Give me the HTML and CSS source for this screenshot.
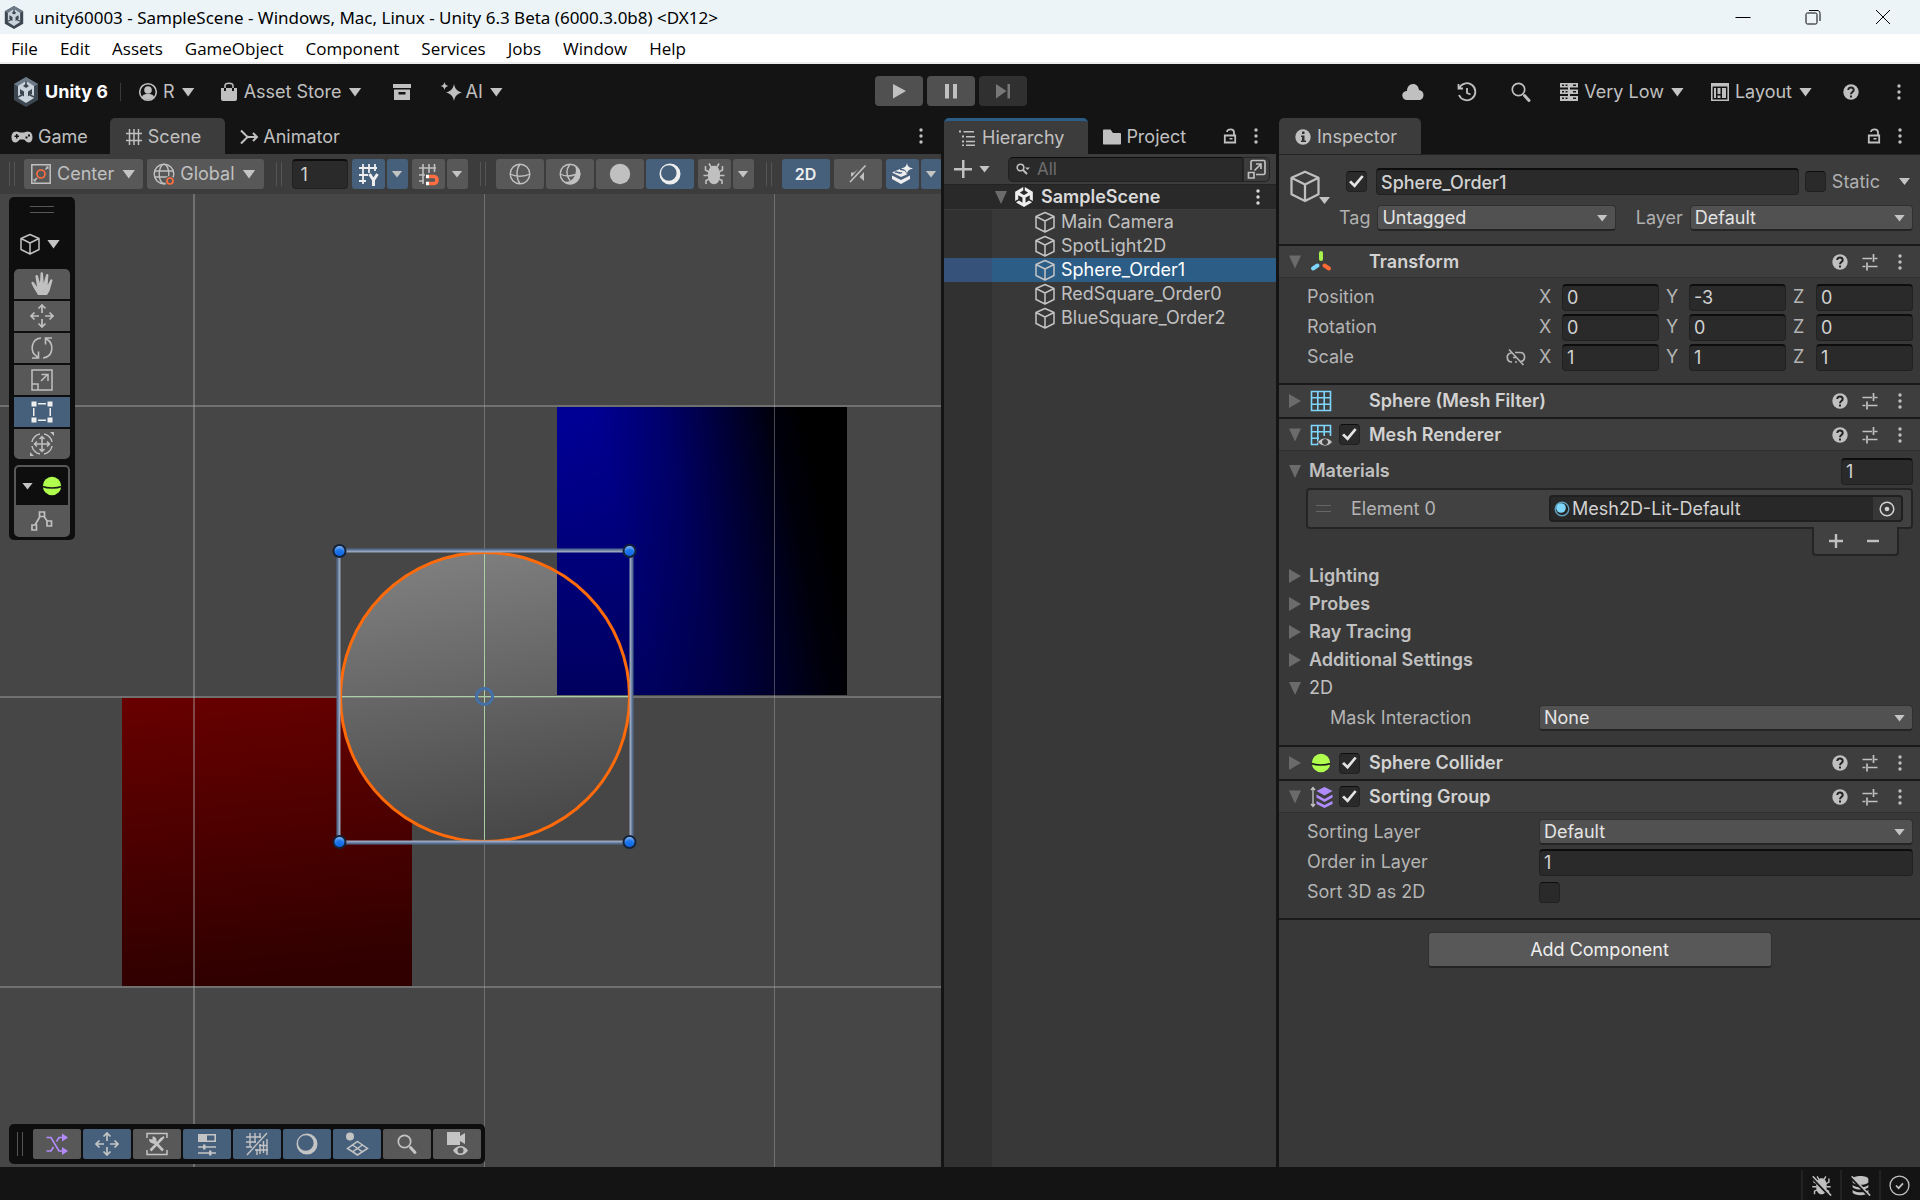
FILE: index.html
```
<!DOCTYPE html>
<html lang="en">
<head>
    <meta charset="UTF-8">
    <meta name="viewport" content="width=device-width, initial-scale=1.0">
    <title>unity60003 - SampleScene</title>
    <link rel="stylesheet" href="styles.css">
</head>
<body>

    <!-- Icon sprite -->
    <svg class="sprite" aria-hidden="true">
        <symbol id="unity" viewBox="0 0 24 24"><path fill="currentColor" d="m12.93 4.29 3.8 2.2c.14.08.14.29 0 .36l-4.52 2.61a.42.42 0 0 1-.42 0L7.27 6.85c-.14-.07-.14-.29 0-.36l3.8-2.2V0L1.38 5.6v11.19l3.71-2.14v-4.39c0-.16.18-.27.32-.18l4.52 2.6a.43.43 0 0 1 .21.37v5.21c0 .16-.18.27-.32.19l-3.8-2.2-3.71 2.15L12 24l9.7-5.6-3.72-2.15-3.8 2.2c-.13.08-.32-.03-.32-.19v-5.21c0-.16.09-.3.22-.37l4.51-2.6c.13-.09.32.02.32.18v4.39l3.71 2.14V5.6L12.93 0Z"/></symbol>
        <symbol id="badge" viewBox="0 0 26 30"><path fill="#3d4752" d="M13 0l12 7v16l-12 7-12-7V7z"/><path fill="#6d7b88" d="M13 0l12 7-12 7L1 7z"/><path fill="#c9d3dc" d="M13 4l8 5v12l-8 5-8-5V9z"/><path fill="#3d4752" d="M13 11l3-2-3-2.500L10 9zM7 12l4 2.500v5L7 17zM19 12l-4 2.500v5l4-2.500z"/><path stroke="#3d4752" stroke-width="1.500" d="M13 4v4M5 20l4-2M21 20l-4-2"/></symbol>
        <symbol id="user" viewBox="0 0 24 24"><circle cx="12" cy="12" r="8.300" fill="none" stroke="currentColor" stroke-width="1.600"/><circle cx="12" cy="10" r="3.800" fill="currentColor"/><path fill="currentColor" d="M6 17c1-3 3.500-3 6-3s5 0 6 3c-3 3.500-9 3.500-12 0z"/></symbol>
        <symbol id="bag" viewBox="0 0 24 24"><path fill="currentColor" d="M4 8h3v3h2V8h6v3h2V8h3v11a2 2 0 0 1-2 2H6a2 2 0 0 1-2-2z"/><path fill="none" stroke="currentColor" stroke-width="1.500" d="M8 8V5.500C8 2.500 16 2.500 16 5.500V8"/></symbol>
        <symbol id="archive" viewBox="0 0 24 24"><path fill="currentColor" d="M3 4h18v4H3z"/><path fill="currentColor" fill-rule="evenodd" d="M4 9.500h16V20H4zM8.500 12v2.500h7V12z"/></symbol>
        <symbol id="sparkle" viewBox="0 0 24 24"><path fill="currentColor" d="M15 4c1 5 3 7 8 8.500-5 1.500-7 3.500-8 8.500-1-5-3-7-8-8.500 5-1.500 7-3.500 8-8.500zM5.500 2c.5 2.500 1.500 3.500 4 4-2.500.5-3.500 1.500-4 4-.5-2.500-1.500-3.500-4-4 2.500-.5 3.500-1.500 4-4z"/></symbol>
        <symbol id="play" viewBox="0 0 24 24"><path fill="currentColor" d="M6 5l13 7-13 7.500z"/></symbol>
        <symbol id="pause" viewBox="0 0 24 24"><path fill="currentColor" d="M6 5h4v14.500H6zM14 5h4v14.500h-4z"/></symbol>
        <symbol id="step" viewBox="0 0 24 24"><path fill="currentColor" d="M5 5l10.500 7L5 19.500zM16.500 5h2.500v14.500h-2.500z"/></symbol>
        <symbol id="cloud" viewBox="0 0 24 24"><path fill="currentColor" d="M6 20a4.500 4.500 0 0 1-3-8c1-1 2-1 3-1 0-4 2.500-7 6-7 3.500 0 5.500 2.500 6 6 2.500.5 4.500 2 4.500 5S20.500 20 18 20z"/></symbol>
        <symbol id="history" viewBox="0 0 24 24"><path fill="none" stroke="currentColor" stroke-width="1.800" d="M3.500 4v4.500H8M4 8.500A8.500 8.500 0 1 1 4 15M12 8v5l3.500 1.500"/></symbol>
        <symbol id="search" viewBox="0 0 24 24"><circle cx="9.500" cy="9.500" r="6.200" fill="none" stroke="currentColor" stroke-width="1.700"/><path stroke="currentColor" stroke-width="3" stroke-linecap="round" d="M15.500 15.500l4.500 5"/></symbol>
        <symbol id="server" viewBox="0 0 24 24"><path fill="currentColor" d="M3 3h18v4.500H3zM3 9.500h18V14H3zM3 16h18v5H3zM11 3h2v18h-2z"/><path fill="#191919" d="M5 4.500h2V6H5zM8.500 4.500h2V6h-2zM16 4.500h3V6h-3zM5 11h2v1.500H5zM8.500 11h2v1.500h-2zM16 11h3v1.500h-3zM5 17.500h2V19H5zM8.500 17.500h2V19h-2zM16 17.500h3V19h-3z"/></symbol>
        <symbol id="layout" viewBox="0 0 24 24"><path fill="none" stroke="currentColor" stroke-width="1.600" d="M3.800 3.800h16.400v16.400H3.800z"/><path fill="currentColor" d="M4 3.500h16v3H4zM6 8h2v10H6zM9.500 8h3v6h-3zM14 8h4v10h-4zM9.500 15.500h3V18h-3z"/></symbol>
        <symbol id="help" viewBox="0 0 24 24"><circle cx="12" cy="12" r="7.700" fill="currentColor"/><path fill="none" stroke="#222" stroke-width="2" d="M9.300 10c0-3.500 5.500-3.300 5.400 0 0 2-2.700 2-2.700 4.200"/><path fill="#222" d="M11 15.500h2v2h-2z"/></symbol>
        <symbol id="info" viewBox="0 0 24 24"><circle cx="12" cy="12" r="7.700" fill="currentColor"/><path fill="#333" d="M11 6.500h2.500v2.500H11zM10 10.500h3.500v5H15V17h-5v-1.500h1V12h-1z"/></symbol>
        <symbol id="kebab" viewBox="0 0 6 24"><circle cx="3" cy="6" r="1.700" fill="currentColor"/><circle cx="3" cy="12" r="1.700" fill="currentColor"/><circle cx="3" cy="18" r="1.700" fill="currentColor"/></symbol>
        <symbol id="lock" viewBox="0 0 16 20"><path fill="none" stroke="currentColor" stroke-width="1.800" d="M2.800 9.500h10.400v7H2.800zM12 9V6.500C12 2.500 5 2.500 5 6"/><path fill="currentColor" d="M7.500 12h3v1.500h-3z"/></symbol>
        <symbol id="gamepad" viewBox="0 0 24 24"><path fill="currentColor" fill-rule="evenodd" d="M6.500 6.500c2 0 2.500 1 3.500 1h4c1 0 1.500-1 3.500-1 4 0 5 3 5 6s-1.500 5-4 5-3.500-3-4.500-3h-4c-1 0-2 3-4.500 3s-4-2-4-5 1-6 5-6zM6 9v1.500H4.500V12H6v1.500h1.500V12H9v-1.500H7.500V9zM18 9.500v2h2v-2zM15.500 11.500v2h2v-2z"/></symbol>
        <symbol id="hash" viewBox="0 0 24 24"><path fill="none" stroke="currentColor" stroke-width="1.500" d="M7.500 4v16M12 4v16M16.500 4v16M4 8.500h16M4 15.500h16"/></symbol>
        <symbol id="animator" viewBox="0 0 24 24"><path fill="none" stroke="currentColor" stroke-width="2" d="M4 5.500l4 4c1 1.500 2 2.500 4 2.500h7M4 18.500l4-4c1-1.500 2-2.500 4-2.500M16 8l4 4-4 4"/></symbol>
        <symbol id="list" viewBox="0 0 24 24"><path fill="currentColor" d="M3 4.500h2v2H3zM7.500 5H18v1.500H7.500zM6 9.500h2v2H6zM10 10h9v1.500h-9zM6 14.500h2v2H6zM10 14.700h9v1.500h-9zM6 18.500h2v1.500H6zM10 18.500h9V20h-9z"/></symbol>
        <symbol id="folder" viewBox="0 0 24 24"><path fill="currentColor" d="M3 5.500C3 5 3.500 4.500 4 4.500h6.500L13 8h7c.6 0 1 .4 1 1v9.500c0 .6-.4 1-1 1H4c-.6 0-1-.4-1-1z"/></symbol>
        <symbol id="pivot" viewBox="0 0 24 24"><path fill="none" stroke="currentColor" stroke-width="1.500" d="M2.800 2.800h18.400v18.400H2.800zM5.500 18.500L8 16M16.500 7.500L19 5"/><path fill="currentColor" d="M19.500 4.500v3l-3-3zM4.500 19.500v-3l3 3z"/><circle cx="12" cy="12" r="4" fill="none" stroke="#ff6d40" stroke-width="1.700"/></symbol>
        <symbol id="globe" viewBox="0 0 24 24"><g fill="none" stroke="currentColor" stroke-width="1.400"><circle cx="12" cy="12" r="9.800"/><ellipse cx="12" cy="12" rx="4.800" ry="9.800"/><path d="M2.500 9h19M2.500 15h19"/></g><circle cx="18" cy="19" r="5" fill="#585858"/><circle cx="18" cy="19" r="3" fill="none" stroke="#ff6d40" stroke-width="1.700"/></symbol>
        <symbol id="gridy" viewBox="0 0 24 24"><path fill="none" stroke="currentColor" stroke-width="1.800" d="M7 2v20M13 2v9M19 2v7M3 6h18M3 13h9M3 19h7"/><path fill="none" stroke="currentColor" stroke-width="3" d="M13.500 12l4 6 4-6M17.500 17.500V24"/></symbol>
        <symbol id="snap" viewBox="0 0 24 24"><path fill="none" stroke="currentColor" stroke-width="1.600" d="M7 2v20M13 2v9M18.500 2v8M3 6h17M3 13h6M3 19h5"/><path fill="none" stroke="#ff6d40" stroke-width="3.500" d="M13 14.500h5c4 0 4 7 0 7h-5"/><path fill="#fff" d="M10 12.700h3v3.500h-3zM10 19.700h3v3.500h-3z"/></symbol>
        <symbol id="wire" viewBox="0 0 24 24"><g fill="none" stroke="currentColor" stroke-width="1.400"><circle cx="12" cy="12" r="9.800"/><path d="M12 2.200c-4 5-4 14 0 19.600M2.200 12c5 3 14.600 3 19.600 0"/></g></symbol>
        <symbol id="wireshade" viewBox="0 0 24 24"><path fill="currentColor" d="M16.500 3A10.200 10.200 0 1 1 5 19.500c3 .8 7 .2 9.500-2.500 3.500-3.500 4.500-9.500 2-14z"/><g fill="none" stroke="currentColor" stroke-width="1.400"><circle cx="12" cy="12" r="9.800"/><path d="M12 2.200c-4 5-4 11 0 16.500M2.200 12c4.500 2.500 10 2.500 15.500.5"/></g></symbol>
        <symbol id="solid" viewBox="0 0 24 24"><circle cx="12" cy="12" r="10.200" fill="currentColor"/></symbol>
        <symbol id="moon" viewBox="0 0 24 24"><path fill="currentColor" fill-rule="evenodd" d="M12 1.500a10.500 10.500 0 1 1 0 21 10.500 10.500 0 0 1 0-21zM10.800 3.200a7.800 7.800 0 1 0 0 15.600 7.800 7.800 0 0 0 0-15.600z"/></symbol>
        <symbol id="bug" viewBox="0 0 24 24"><path fill="currentColor" d="M8 5.500c1-2.500 7-2.500 8 0l1 2c1.500 3 1.500 9-.5 12-2 3.500-7 3.500-9 0-2-3-2-9-.5-12z"/><path fill="none" stroke="currentColor" stroke-width="1.600" d="M9 5L7 1.500M15 5l2-3.500M7 10L3.500 8V4M17 10l3.500-2V4M6 13.500H1.500M18 13.500h4.500M7 17l-3 1.500V22M17 17l3 1.500V22"/></symbol>
        <symbol id="mute" viewBox="0 0 24 24"><path fill="none" stroke="currentColor" stroke-width="1.700" d="M4 20L19.500 3.500"/><path fill="currentColor" d="M5 10.500h3l4-3.500L6 14.500H5zM18 10v9l-4.500-4z"/></symbol>
        <symbol id="effects" viewBox="0 0 24 24"><path fill="currentColor" d="M17 1c.7 3.500 2 4.500 6 5.500-4 1-5.300 2-6 5.500-.7-3.500-2-4.500-6-5.500 4-1 5.300-2 6-5.500zM10 7l-8 3.500 9 4.500 6-2.500-2-3.500-5-1zM2 13.500l9 4.500 9-4.500V17l-9 5-9-5z"/><path fill="none" stroke="#46607c" stroke-width="1.500" d="M5 10.500c2-2 4 2 7 0"/></symbol>
        <symbol id="plus" viewBox="0 0 24 24"><path fill="currentColor" d="M11 3h2.500v8H21v2.500h-7.500V21H11v-7.500H3V11h8z"/></symbol>
        <symbol id="searchmenu" viewBox="0 0 16 16"><circle cx="5.500" cy="6.500" r="3.300" fill="none" stroke="currentColor" stroke-width="1.600"/><path stroke="currentColor" stroke-width="2" d="M8 9l4 4"/><path fill="currentColor" d="M10 6.500h5L12.500 9z"/></symbol>
        <symbol id="popout" viewBox="0 0 24 24"><path fill="none" stroke="currentColor" stroke-width="1.700" d="M6 13V5c0-1 .5-1.500 1.500-1.500h11c1 0 1.500.5 1.500 1.500v11c0 1-.5 1.500-1.500 1.500H11M3.500 15.500H9V21H3.500zM9.500 13.500l6-6M11 7h5v5"/></symbol>
        <symbol id="cube" viewBox="0 0 24 24"><path fill="none" stroke="currentColor" stroke-width="1.500" stroke-linejoin="round" d="M12 2.500l9 4v11l-9 4.500-9-4.500v-11zM3 6.500l9 4.500 9-4.500M12 11v11"/></symbol>
        <symbol id="hand" viewBox="0 0 24 24"><path fill="currentColor" d="M8 23c-1.500-3-4-6-6.500-11.500C1 10 3 9 4 10.500L7 15 5.500 4.500c0-1.800 2-2 2.500-.3L10 11l.5-9.500c.2-1.700 2.300-1.700 2.500 0l.7 9.500L16 3c.5-1.700 2.500-1.300 2.400.3L17.700 13l2.500-5c.8-1.400 2.600-.7 2.200 1L19.500 19 17 23z"/></symbol>
        <symbol id="move" viewBox="0 0 24 24"><path fill="none" stroke="currentColor" stroke-width="1.700" d="M12 9V1.500M8.500 4.500L12 1l3.500 3.500M12 15v7.500M8.500 19.500L12 23l3.500-3.500M9 12H1.500M4.500 8.500L1 12l3.500 3.500M15 12h7.500M19.500 8.500L23 12l-3.500 3.500"/></symbol>
        <symbol id="rotate" viewBox="0 0 24 24"><path fill="none" stroke="currentColor" stroke-width="1.600" d="M11 2C1 3 -1 16 7.500 21M2 22h6.500v-6.500M13 22C23 21 25 8 16.500 3M22 2h-6.500v6.500"/></symbol>
        <symbol id="scale" viewBox="0 0 24 24"><path fill="none" stroke="currentColor" stroke-width="1.500" d="M2 2h20v20H2zM2 16h6v6M11 13l6-6M11.500 6.500H18V13"/></symbol>
        <symbol id="recttool" viewBox="0 0 24 24"><path fill="currentColor" d="M1.500 1.500h5v5h-5zM17.500 1.500h5v5h-5zM1.500 17.500h5v5h-5zM17.500 17.500h5v5h-5zM8 3h8v1.500H8zM8 19.500h8V21H8zM3 8h1.500v8H3zM19.500 8H21v8h-1.500z"/></symbol>
        <symbol id="transformtool" viewBox="0 0 24 24"><path fill="none" stroke="currentColor" stroke-width="1.500" d="M12 4.500v15M4.500 12h15M9.500 7L12 4.500 14.500 7M9.500 17l2.500 2.500 2.500-2.500M7 9.500L4.500 12 7 14.500M17 9.500l2.500 2.500-2.500 2.500M10 2C6 2.500 2.500 6 2 10M14 2c4 .5 7.500 4 8 8M10 22c-4-.5-7.500-4-8-8M14 22c4-.5 7.500-4 8-8"/><path fill="currentColor" d="M20 0h4v4zM0 20v4h4z"/></symbol>
        <symbol id="ball" viewBox="0 0 24 24"><circle cx="12" cy="12" r="9.200" fill="#b0ff4f"/><path fill="none" stroke="#1a1a1a" stroke-width="1.400" d="M2.500 12.500c5 2 14 2 19 0"/></symbol>
        <symbol id="nodes" viewBox="0 0 24 24"><path fill="none" stroke="currentColor" stroke-width="1.700" d="M9.500 4h5v4.500h-5zM2 17h4.500v5H2zM17 13h4.500v5H17zM5 17l5-8.500M14 8.500l3.500 5"/></symbol>
        <symbol id="shuffle" viewBox="0 0 24 24"><path fill="none" stroke="#b58cff" stroke-width="1.600" d="M1.500 5.500H6L14 19h4M1.500 19H6l2.500-4M11.500 9.500L14 5.500h4"/><path fill="#b58cff" d="M17 1.500l6 4-6 4zM17 15l6 4-6 4z"/></symbol>
        <symbol id="tools" viewBox="0 0 24 24"><path fill="none" stroke="currentColor" stroke-width="1.500" d="M2 6V1.500h20V6M2 18v4.500h20V18"/><path stroke="currentColor" stroke-width="2.600" d="M5.500 18.500L17 6.500M10 10l8 8.500"/><path fill="currentColor" d="M4 7l3.500.5V4.500c3 0 4.500 2 4 5L9.500 12C7 11.500 4 10.500 4 7zM14 7.500L18.500 4l1 1.500L16.500 9z"/></symbol>
        <symbol id="props" viewBox="0 0 24 24"><path fill="none" stroke="currentColor" stroke-width="1.600" d="M3.800 2.800h16.400v6.400H3.800zM3 15h18M3 21h18"/><path fill="currentColor" d="M3 2h9v8H3zM8 12.500h2.500v5H8zM14 18.500h2.500v5H14z"/></symbol>
        <symbol id="gridsnap" viewBox="0 0 24 24"><path fill="none" stroke="currentColor" stroke-width="1.400" d="M22 1L2 23M5 1v14M10 1v10M15 1v5M1 5h15M1 10h10M1 15h6M12 17v6M15 12v10M18.500 9v12M22 7v16M10 18h13M14 13.500h8"/></symbol>
        <symbol id="orient" viewBox="0 0 24 24"><circle cx="5" cy="4.500" r="4" fill="currentColor"/><path fill="none" stroke="currentColor" stroke-width="1.500" d="M12.500 9.500l10 7-10 6.500-10-6.500zM7.500 13l10 6.800M17.500 13l-10 6.800"/></symbol>
        <symbol id="camera" viewBox="0 0 24 24"><path fill="currentColor" d="M2 0h13v4l5-3v11l-5-3v4H2z"/><path fill="currentColor" fill-rule="evenodd" d="M8 18.500c4-6 11-6 15 0-4 6-11 6-15 0zm7.500-3a3 3 0 1 0 0 6 3 3 0 0 0 0-6z"/></symbol>
        <symbol id="sliders" viewBox="0 0 24 24"><path fill="none" stroke="currentColor" stroke-width="1.700" d="M4.500 8.500H14M16.500 8.500h3M15.500 4v8M4.500 16.500h3M10 16.500h9.500M9 12.500v8"/></symbol>
        <symbol id="axes" viewBox="0 0 24 24"><g stroke-width="4" stroke-linecap="round"><path stroke="#a6f24c" d="M12 3v6"/><path stroke="#7fd6fd" d="M8.500 15.500L4 18.500"/><path stroke="#ff6a33" d="M15.500 15.500l4.500 3"/></g></symbol>
        <symbol id="mesh" viewBox="0 0 24 24"><path fill="none" stroke="#7fd6fd" stroke-width="1.600" d="M2.500 2.500h19v19h-19zM8.800 2.500v19M15.200 2.500v19M2.500 8.800h19M2.500 15.200h19"/></symbol>
        <symbol id="meshview" viewBox="0 0 24 24"><path fill="none" stroke="#7fd6fd" stroke-width="1.600" d="M9 21.500H2.500v-19h19V13M8.800 2.500v19M15.200 2.500V13M2.500 8.800h19M2.500 15.200H10"/><path fill="#c4c4c4" stroke="#3e3e3e" fill-rule="evenodd" d="M8.500 19c4-5.500 11-5.500 15 0-4 5.500-11 5.500-15 0zm7.500-2.500a2.500 2.500 0 1 0 0 5 2.500 2.500 0 0 0 0-5z"/></symbol>
        <symbol id="layers" viewBox="0 0 24 24"><path fill="none" stroke="#c4c4c4" stroke-width="1.300" d="M4 3v18M2 5l2-2.500L6 5M2 19l2 2.500L6 19"/><path fill="#b18cff" d="M15.500 2l8 4-8 4.500-8-4.500zM7.500 9.500l8 4.500 8-4.500v3L15.500 17l-8-4.500zM7.500 16l8 4 8-4v3l-8 4-8-4z"/></symbol>
        <symbol id="material" viewBox="0 0 16 16"><circle cx="8" cy="8" r="6.800" fill="#242424" stroke="#5f9dbb" stroke-width="1.400"/><circle cx="7" cy="7" r="4.800" fill="#7fd6fd"/></symbol>
        <symbol id="target" viewBox="0 0 24 24"><circle cx="12" cy="12" r="6.800" fill="none" stroke="currentColor" stroke-width="1.500"/><circle cx="12" cy="12" r="2.300" fill="currentColor"/></symbol>
        <symbol id="unlink" viewBox="0 0 24 24"><path fill="none" stroke="currentColor" stroke-width="1.700" d="M8 17c-6 0-6.500-9-.5-9M11 7.500h5c6 0 6 9 .5 9M9 12.500h3M5 4.500L19.500 20M11 17h2"/></symbol>
        <symbol id="add" viewBox="0 0 24 24"><path fill="currentColor" d="M10.800 5h2.400v5.800H19v2.400h-5.800V19h-2.400v-5.800H5v-2.400h5.800z"/></symbol>
        <symbol id="remove" viewBox="0 0 24 24"><path fill="currentColor" d="M6 10.800h12v2.400H6z"/></symbol>
        <symbol id="stack" viewBox="0 0 24 24"><path fill="currentColor" d="M3 5c0-5 18-5 18 0v3.500c-3 3.500-15 3.500-18 0zM3 11.500c4 3.500 14 3.500 18 0V14c-3 3.500-15 3.500-18 0zM3 17c4 3.500 14 3.500 18 0v3c-2 4-16 4-18 0z"/><path stroke="#191919" stroke-width="3" d="M1 2.500l21 22"/><path stroke="currentColor" stroke-width="1.800" d="M2 1.500l21 22"/></symbol>
        <symbol id="bugoff" viewBox="0 0 24 24"><use href="#bug"/><path stroke="#191919" stroke-width="3" d="M1 2.500l21 22"/><path stroke="currentColor" stroke-width="1.800" d="M2 1.500l21 22"/></symbol>
        <symbol id="okring" viewBox="0 0 24 24"><circle cx="12" cy="12" r="10.800" fill="none" stroke="currentColor" stroke-width="1.500"/><path fill="none" stroke="currentColor" stroke-width="2" d="M8 12l3 3 5-5.500"/></symbol>
    </svg>

    <!-- Window title bar -->
    <header class="titlebar">
        <svg class="title-logo"><use href="#badge"/></svg>
        <h1>unity60003 - SampleScene - Windows, Mac, Linux - Unity 6.3 Beta (6000.3.0b8) &lt;DX12&gt;</h1>
        <div class="window-buttons">
            <button aria-label="Minimize"><svg viewBox="0 0 16 16"><path d="M.5 8.500h15"/></svg></button>
            <button aria-label="Restore"><svg viewBox="0 0 16 16"><path d="M1 5.500C1 4.500 1.500 4 2.500 4h8c1 0 1.500.5 1.500 1.500v8c0 1-.5 1.500-1.500 1.500h-8C1.500 15 1 14.500 1 13.500zM4 1.500h8c2 0 3 1 3 3V12"/></svg></button>
            <button aria-label="Close"><svg viewBox="0 0 16 16"><path d="M1 1l14 14M15 1L1 15"/></svg></button>
        </div>
    </header>

    <nav class="menubar">
        <button>File</button>
        <button>Edit</button>
        <button>Assets</button>
        <button>GameObject</button>
        <button>Component</button>
        <button>Services</button>
        <button>Jobs</button>
        <button>Window</button>
        <button>Help</button>
    </nav>

    <!-- Main toolbar -->
    <div class="toolbar">
        <div class="toolbar-left">
            <svg class="unity-logo"><use href="#badge"/></svg>
            <strong>Unity 6</strong>
            <span class="divider"></span>
            <button class="account"><svg class="icon"><use href="#user"/></svg>R<i class="caret"></i></button>
            <button class="store"><svg class="icon"><use href="#bag"/></svg>Asset Store<i class="caret"></i></button>
            <button class="packages" aria-label="Package Manager"><svg class="icon"><use href="#archive"/></svg></button>
            <button class="ai"><svg class="icon"><use href="#sparkle"/></svg>AI<i class="caret"></i></button>
        </div>
        <div class="play-controls">
            <button aria-label="Play"><svg class="icon"><use href="#play"/></svg></button>
            <button aria-label="Pause"><svg class="icon"><use href="#pause"/></svg></button>
            <button aria-label="Step" disabled><svg class="icon"><use href="#step"/></svg></button>
        </div>
        <div class="toolbar-right">
            <button class="cloud" aria-label="Cloud"><svg class="icon"><use href="#cloud"/></svg></button>
            <button class="history" aria-label="Undo history"><svg class="icon"><use href="#history"/></svg></button>
            <button aria-label="Search"><svg class="icon"><use href="#search"/></svg></button>
            <button><svg class="icon"><use href="#server"/></svg>Very Low<i class="caret"></i></button>
            <button class="layout"><svg class="icon"><use href="#layout"/></svg>Layout<i class="caret"></i></button>
            <button class="help" aria-label="Help"><svg class="icon"><use href="#help"/></svg></button>
            <button aria-label="More"><svg class="kebab"><use href="#kebab"/></svg></button>
        </div>
    </div>

    <main class="workspace">

        <!-- Scene view -->
        <section class="panel">
            <div class="tabs">
                <button class="tab tab-game"><svg class="icon"><use href="#gamepad"/></svg>Game</button>
                <button class="tab active"><svg class="icon"><use href="#hash"/></svg>Scene</button>
                <button class="tab"><svg class="icon"><use href="#animator"/></svg>Animator</button>
                <div class="tab-tools">
                    <button aria-label="Scene options"><svg class="kebab"><use href="#kebab"/></svg></button>
                </div>
            </div>

            <div class="scene-toolbar">
                <span class="grip"></span>
                <button class="tool drop"><svg class="icon"><use href="#pivot"/></svg>Center<i class="caret"></i></button>
                <button class="tool drop"><svg class="icon"><use href="#globe"/></svg>Global<i class="caret"></i></button>
                <span class="grip"></span>
                <input class="field snap-size" type="text" value="1" aria-label="Grid size">
                <div class="group">
                    <button class="tool narrow on" aria-label="Grid axis"><svg class="icon"><use href="#gridy"/></svg></button>
                    <button class="tool arrow on" aria-label="Grid menu"><i class="caret small"></i></button>
                </div>
                <div class="group">
                    <button class="tool narrow" aria-label="Snapping"><svg class="icon"><use href="#snap"/></svg></button>
                    <button class="tool arrow" aria-label="Snapping menu"><i class="caret small"></i></button>
                </div>
                <span class="grip"></span>
                <div class="group">
                    <button class="tool" aria-label="Wireframe"><svg class="icon"><use href="#wire"/></svg></button>
                    <button class="tool" aria-label="Shaded wireframe"><svg class="icon"><use href="#wireshade"/></svg></button>
                    <button class="tool" aria-label="Unlit"><svg class="icon"><use href="#solid"/></svg></button>
                    <button class="tool on" aria-label="Shaded"><svg class="icon"><use href="#moon"/></svg></button>
                </div>
                <div class="group">
                    <button class="tool narrow" aria-label="Debug draw"><svg class="icon"><use href="#bug"/></svg></button>
                    <button class="tool arrow" aria-label="Debug menu"><i class="caret small"></i></button>
                </div>
                <span class="grip"></span>
                <button class="tool on mode">2D</button>
                <button class="tool" aria-label="Mute"><svg class="icon"><use href="#mute"/></svg></button>
                <div class="group">
                    <button class="tool narrow on" aria-label="Effects"><svg class="icon"><use href="#effects"/></svg></button>
                    <button class="tool arrow on" aria-label="Effects menu"><i class="caret small"></i></button>
                </div>
            </div>

            <div class="viewport">
                <svg class="scene" viewBox="0 0 941 973" preserveAspectRatio="xMidYMid slice">
                    <defs>
                        <linearGradient id="blueLight" x1="0" y1="0.12" x2="0.9" y2="-0.08">
                            <stop offset="0" stop-color="#000098"/>
                            <stop offset="0.16" stop-color="#000094"/>
                            <stop offset="0.4" stop-color="#00006e"/>
                            <stop offset="0.62" stop-color="#00003a"/>
                            <stop offset="0.8" stop-color="#00000e"/>
                            <stop offset="0.92" stop-color="#000000"/>
                        </linearGradient>
                        <linearGradient id="blueFade" x1="0" y1="0" x2="0" y2="1">
                            <stop offset="0" stop-color="#000" stop-opacity="0"/>
                            <stop offset="1" stop-color="#000" stop-opacity="0.38"/>
                        </linearGradient>
                        <linearGradient id="redLight" x1="0" y1="0" x2="0.1" y2="1">
                            <stop offset="0" stop-color="#680000"/>
                            <stop offset="1" stop-color="#300000"/>
                        </linearGradient>
                        <linearGradient id="sphereLight" x1="0.4" y1="0" x2="0.6" y2="1">
                            <stop offset="0" stop-color="#7f7f7f"/>
                            <stop offset="1" stop-color="#474747"/>
                        </linearGradient>
                        <radialGradient id="handle" cx="0.5" cy="0.85" r="0.9">
                            <stop offset="0" stop-color="#0f66e6"/>
                            <stop offset="0.5" stop-color="#1f77ec"/>
                            <stop offset="1" stop-color="#b5d4fa"/>
                        </radialGradient>
                    </defs>
                    <rect class="ground" width="941" height="973"/>
                    <rect x="122" y="504" width="290" height="288" fill="url(#redLight)"/>
                    <circle cx="485" cy="502" r="144" fill="url(#sphereLight)"/>
                    <rect x="557" y="213" width="290" height="288" fill="url(#blueLight)"/>
                    <rect x="557" y="213" width="290" height="288" fill="url(#blueFade)"/>
                    <g class="grid-lines">
                        <path d="M194 0v973" stroke-width="2"/>
                        <path d="M484.500 0v973M774.500 0v973"/>
                        <path d="M0 212h941M0 503h941M0 793h941" stroke-width="2"/>
                    </g>
                    <path class="collider" d="M340 502.500h290M484.500 358v290"/>
                    <circle class="outline" cx="485" cy="503" r="144.500"/>
                    <path class="rect-shadow" d="M338 356h294v293h-294z"/>
                    <path class="rect-handle" d="M339.500 357.500h291v290h-291z"/>
                    <g class="knobs">
                        <circle cx="339.500" cy="357" r="6"/>
                        <circle cx="629.500" cy="357" r="6"/>
                        <circle cx="339.500" cy="648" r="6"/>
                        <circle cx="629.500" cy="648" r="6"/>
                    </g>
                    <circle class="pivot-ring" cx="484.500" cy="502.500" r="8"/>
                </svg>

                <!-- Floating tool palette -->
                <div class="palette">
                    <span class="palette-grip"></span>
                    <button class="palette-mode" aria-label="Tool context"><svg class="icon"><use href="#cube"/></svg><i class="caret"></i></button>
                    <div class="palette-tools">
                        <button class="tool" aria-label="View"><svg class="icon"><use href="#hand"/></svg></button>
                        <button class="tool" aria-label="Move"><svg class="icon"><use href="#move"/></svg></button>
                        <button class="tool" aria-label="Rotate"><svg class="icon"><use href="#rotate"/></svg></button>
                        <button class="tool" aria-label="Scale"><svg class="icon"><use href="#scale"/></svg></button>
                        <button class="tool on" aria-label="Rect"><svg class="icon"><use href="#recttool"/></svg></button>
                        <button class="tool" aria-label="Transform"><svg class="icon"><use href="#transformtool"/></svg></button>
                    </div>
                    <div class="palette-component">
                        <button class="component-pick" aria-label="Sphere Collider tools"><i class="caret small"></i><svg class="icon"><use href="#ball"/></svg></button>
                        <button class="tool" aria-label="Edit collider"><svg class="icon"><use href="#nodes"/></svg></button>
                    </div>
                </div>

                <!-- Overlay bar -->
                <div class="overlay-bar">
                    <span class="grip"></span>
                    <button class="tool" aria-label="Shuffle"><svg class="icon"><use href="#shuffle"/></svg></button>
                    <button class="tool on" aria-label="Tools"><svg class="icon"><use href="#move"/></svg></button>
                    <button class="tool" aria-label="Tool settings"><svg class="icon"><use href="#tools"/></svg></button>
                    <button class="tool on" aria-label="View options"><svg class="icon"><use href="#props"/></svg></button>
                    <button class="tool on" aria-label="Grid and snap"><svg class="icon"><use href="#gridsnap"/></svg></button>
                    <button class="tool on" aria-label="Draw modes"><svg class="icon"><use href="#moon"/></svg></button>
                    <button class="tool on" aria-label="Orientation"><svg class="icon"><use href="#orient"/></svg></button>
                    <button class="tool" aria-label="Search"><svg class="icon"><use href="#search"/></svg></button>
                    <button class="tool" aria-label="Cameras"><svg class="icon"><use href="#camera"/></svg></button>
                </div>
            </div>
        </section>

        <!-- Hierarchy -->
        <section class="panel">
            <div class="tabs">
                <button class="tab active focused"><svg class="icon"><use href="#list"/></svg>Hierarchy</button>
                <button class="tab tab-project"><svg class="icon"><use href="#folder"/></svg>Project</button>
                <div class="tab-tools">
                    <button aria-label="Lock"><svg class="lock"><use href="#lock"/></svg></button>
                    <button aria-label="Hierarchy options"><svg class="kebab"><use href="#kebab"/></svg></button>
                </div>
            </div>
            <div class="hierarchy-toolbar">
                <button class="create" aria-label="Create"><svg class="icon"><use href="#plus"/></svg><i class="caret small"></i></button>
                <label class="search-field">
                    <svg class="search-icon"><use href="#searchmenu"/></svg>
                    <input type="text" placeholder="All" aria-label="Search hierarchy">
                </label>
                <button class="popout" aria-label="Open search window"><svg class="icon"><use href="#popout"/></svg></button>
            </div>
            <div class="hierarchy">
                <div class="scene-row">
                    <i class="fold open"></i>
                    <svg class="scene-icon"><use href="#unity"/></svg>
                    <strong>SampleScene</strong>
                    <button aria-label="Scene menu"><svg class="kebab"><use href="#kebab"/></svg></button>
                </div>
                <ul class="objects">
                    <li><svg class="icon"><use href="#cube"/></svg>Main Camera</li>
                    <li><svg class="icon"><use href="#cube"/></svg>SpotLight2D</li>
                    <li class="selected"><svg class="icon"><use href="#cube"/></svg>Sphere_Order1</li>
                    <li><svg class="icon"><use href="#cube"/></svg>RedSquare_Order0</li>
                    <li><svg class="icon"><use href="#cube"/></svg>BlueSquare_Order2</li>
                </ul>
            </div>
        </section>

        <!-- Inspector -->
        <section class="panel">
            <div class="tabs">
                <button class="tab active"><svg class="icon"><use href="#info"/></svg>Inspector</button>
                <div class="tab-tools">
                    <button aria-label="Lock"><svg class="lock"><use href="#lock"/></svg></button>
                    <button aria-label="Inspector options"><svg class="kebab"><use href="#kebab"/></svg></button>
                </div>
            </div>
            <div class="inspector">

                <div class="object-header">
                    <button class="object-icon" aria-label="Object icon"><svg><use href="#cube"/></svg><i class="caret small"></i></button>
                    <div class="object-fields">
                        <div class="object-name">
                            <input type="checkbox" checked aria-label="Active">
                            <input class="field" type="text" value="Sphere_Order1" aria-label="Name">
                            <input type="checkbox" id="static">
                            <label for="static">Static</label>
                            <button aria-label="Static flags"><i class="caret small"></i></button>
                        </div>
                        <div class="object-tags">
                            <label for="tag">Tag</label>
                            <div class="select"><select id="tag"><option>Untagged</option></select></div>
                            <label for="layer">Layer</label>
                            <div class="select"><select id="layer"><option>Default</option></select></div>
                        </div>
                    </div>
                </div>

                <article class="component">
                    <header>
                        <i class="fold open"></i>
                        <svg class="icon"><use href="#axes"/></svg>
                        <span class="no-check"></span>
                        <h2>Transform</h2>
                        <button aria-label="Help"><svg class="icon"><use href="#help"/></svg></button>
                        <button aria-label="Presets"><svg class="icon"><use href="#sliders"/></svg></button>
                        <button aria-label="More"><svg class="kebab"><use href="#kebab"/></svg></button>
                    </header>
                    <div class="component-body">
                        <div class="row vector">
                            <span class="row-label">Position</span>
                            <label>X<input class="field" type="text" value="0"></label>
                            <label>Y<input class="field" type="text" value="-3"></label>
                            <label>Z<input class="field" type="text" value="0"></label>
                        </div>
                        <div class="row vector">
                            <span class="row-label">Rotation</span>
                            <label>X<input class="field" type="text" value="0"></label>
                            <label>Y<input class="field" type="text" value="0"></label>
                            <label>Z<input class="field" type="text" value="0"></label>
                        </div>
                        <div class="row vector">
                            <span class="row-label">Scale<button aria-label="Constrain proportions"><svg class="icon"><use href="#unlink"/></svg></button></span>
                            <label>X<input class="field" type="text" value="1"></label>
                            <label>Y<input class="field" type="text" value="1"></label>
                            <label>Z<input class="field" type="text" value="1"></label>
                        </div>
                    </div>
                </article>

                <article class="component folded">
                    <header>
                        <i class="fold"></i>
                        <svg class="icon"><use href="#mesh"/></svg>
                        <span class="no-check"></span>
                        <h2>Sphere (Mesh Filter)</h2>
                        <button aria-label="Help"><svg class="icon"><use href="#help"/></svg></button>
                        <button aria-label="Presets"><svg class="icon"><use href="#sliders"/></svg></button>
                        <button aria-label="More"><svg class="kebab"><use href="#kebab"/></svg></button>
                    </header>
                </article>

                <article class="component">
                    <header>
                        <i class="fold open"></i>
                        <svg class="icon"><use href="#meshview"/></svg>
                        <input type="checkbox" checked aria-label="Mesh Renderer enabled">
                        <h2>Mesh Renderer</h2>
                        <button aria-label="Help"><svg class="icon"><use href="#help"/></svg></button>
                        <button aria-label="Presets"><svg class="icon"><use href="#sliders"/></svg></button>
                        <button aria-label="More"><svg class="kebab"><use href="#kebab"/></svg></button>
                    </header>
                    <div class="component-body">
                        <div class="foldout materials">
                            <i class="fold open"></i>
                            <strong>Materials</strong>
                            <input class="field count" type="text" value="1" aria-label="Material count">
                        </div>
                        <div class="material-list">
                            <div class="material-item">
                                <span class="drag"></span>
                                <span class="element-name">Element 0</span>
                                <div class="object-field">
                                    <svg class="material-icon"><use href="#material"/></svg>
                                    <span>Mesh2D-Lit-Default</span>
                                    <button aria-label="Pick material"><svg class="icon"><use href="#target"/></svg></button>
                                </div>
                            </div>
                            <div class="list-footer">
                                <button aria-label="Add"><svg class="icon"><use href="#add"/></svg></button>
                                <button aria-label="Remove"><svg class="icon"><use href="#remove"/></svg></button>
                            </div>
                        </div>
                        <div class="foldout"><i class="fold"></i><strong>Lighting</strong></div>
                        <div class="foldout"><i class="fold"></i><strong>Probes</strong></div>
                        <div class="foldout"><i class="fold"></i><strong>Ray Tracing</strong></div>
                        <div class="foldout"><i class="fold"></i><strong>Additional Settings</strong></div>
                        <div class="foldout"><i class="fold open"></i><span>2D</span></div>
                        <div class="row nested">
                            <label class="row-label" for="mask">Mask Interaction</label>
                            <div class="select"><select id="mask"><option>None</option></select></div>
                        </div>
                    </div>
                </article>

                <article class="component folded">
                    <header>
                        <i class="fold"></i>
                        <svg class="icon"><use href="#ball"/></svg>
                        <input type="checkbox" checked aria-label="Sphere Collider enabled">
                        <h2>Sphere Collider</h2>
                        <button aria-label="Help"><svg class="icon"><use href="#help"/></svg></button>
                        <button aria-label="Presets"><svg class="icon"><use href="#sliders"/></svg></button>
                        <button aria-label="More"><svg class="kebab"><use href="#kebab"/></svg></button>
                    </header>
                </article>

                <article class="component">
                    <header>
                        <i class="fold open"></i>
                        <svg class="icon"><use href="#layers"/></svg>
                        <input type="checkbox" checked aria-label="Sorting Group enabled">
                        <h2>Sorting Group</h2>
                        <button aria-label="Help"><svg class="icon"><use href="#help"/></svg></button>
                        <button aria-label="Presets"><svg class="icon"><use href="#sliders"/></svg></button>
                        <button aria-label="More"><svg class="kebab"><use href="#kebab"/></svg></button>
                    </header>
                    <div class="component-body">
                        <div class="row">
                            <label class="row-label" for="sorting-layer">Sorting Layer</label>
                            <div class="select"><select id="sorting-layer"><option>Default</option></select></div>
                        </div>
                        <div class="row">
                            <label class="row-label" for="order">Order in Layer</label>
                            <input class="field" type="text" id="order" value="1">
                        </div>
                        <div class="row">
                            <label class="row-label" for="sort3d">Sort 3D as 2D</label>
                            <input type="checkbox" id="sort3d">
                        </div>
                    </div>
                </article>

                <div class="add-component">
                    <button>Add Component</button>
                </div>
            </div>
        </section>
    </main>

    <footer class="statusbar">
        <button aria-label="Debugger"><svg class="icon"><use href="#bugoff"/></svg></button>
        <button aria-label="Cache server"><svg class="icon"><use href="#stack"/></svg></button>
        <button aria-label="Background tasks"><svg class="icon"><use href="#okring"/></svg></button>
    </footer>

</body>
</html>
```
FILE: styles.css
```
/* Global Styles */
* {
    box-sizing: border-box;
}

body {
    margin: 0;
    min-height: 100vh;
    display: flex;
    flex-direction: column;
    background: #141414;
    color: #c0c0c0;
    font-family: Inter, "Liberation Sans", sans-serif;
    font-size: 18px;
    line-height: 24px;
}

button,
input,
select {
    font: inherit;
    color: inherit;
    margin: 0;
}

button {
    display: flex;
    align-items: center;
    padding: 0;
    border: none;
    background: none;
    cursor: pointer;
    white-space: nowrap;
}

.sprite {
    display: none;
}

svg {
    display: block;
    flex: none;
}

.icon {
    width: 24px;
    height: 24px;
}

.kebab {
    width: 6px;
    height: 24px;
}

.lock {
    width: 16px;
    height: 20px;
}

.caret {
    flex: none;
    width: 13px;
    height: 9px;
    background: #c4c4c4;
    clip-path: polygon(0 0, 100% 0, 50% 100%);
}

.caret.small {
    width: 11px;
    height: 7px;
}

.fold {
    flex: none;
    width: 12px;
    height: 14px;
    background: #6b6b6b;
    clip-path: polygon(0 0, 100% 50%, 0 100%);
}

.fold.open {
    clip-path: polygon(0 8%, 100% 8%, 50% 100%);
}

.field {
    min-width: 0;
    height: 27px;
    padding: 0 4px;
    background: #2a2a2a;
    border: 1px solid #212121;
    border-top: 2px solid #0d0d0d;
    border-radius: 4px;
    color: #d2d2d2;
}

input[type="checkbox"] {
    appearance: none;
    flex: none;
    width: 21px;
    height: 21px;
    display: grid;
    place-items: center;
    background: #2a2a2a;
    border: 1px solid #212121;
    border-top-color: #0d0d0d;
    border-radius: 4px;
}

input[type="checkbox"]:checked::before {
    content: "";
    width: 15px;
    height: 13px;
    background: #e4e4e4;
    clip-path: polygon(0 55%, 14% 42%, 36% 68%, 84% 2%, 98% 14%, 38% 98%);
}

.select {
    flex: 1;
    display: grid;
    align-items: center;
}

.select select {
    grid-area: 1 / 1;
    width: 100%;
    height: 26px;
    padding: 0 4px;
    appearance: none;
    background: #515151;
    border: 1px solid #303030;
    border-bottom: 2px solid #242424;
    border-radius: 4px;
    color: #e4e4e4;
}

.select::after {
    content: "";
    grid-area: 1 / 1;
    justify-self: end;
    width: 11px;
    height: 7px;
    margin-right: 8px;
    background: #c4c4c4;
    clip-path: polygon(0 0, 100% 0, 50% 100%);
    pointer-events: none;
}

/* Title bar and menus */
.titlebar {
    height: 34px;
    display: flex;
    align-items: center;
    gap: 10px;
    padding: 0 29px 0 4px;
    background: #ecf4f8;
    color: #000;
}

.title-logo {
    width: 20px;
    height: 23px;
}

.titlebar h1 {
    margin: 0;
    padding-top: 1px;
    font-family: "Noto Sans", "Open Sans", sans-serif;
    font-size: 17px;
    font-weight: 400;
    white-space: nowrap;
}

.window-buttons {
    margin-left: auto;
    display: flex;
    gap: 54px;
}

.window-buttons svg {
    width: 16px;
    height: 16px;
    fill: none;
    stroke: #000;
}

.menubar {
    height: 30px;
    display: flex;
    gap: 22px;
    padding: 2px 11px 0;
    background: #fff;
    border-bottom: 2px solid #ededed;
    color: #000;
    font-family: "Open Sans", "Noto Sans", sans-serif;
    font-size: 17px;
}

/* Main toolbar */
.toolbar {
    height: 54px;
    display: grid;
    grid-template-columns: 1fr auto 1fr;
    align-items: center;
    padding-right: 18px;
    background: #141414;
}

.toolbar-left {
    display: flex;
    align-items: center;
    padding: 2px 0 0 13px;
}

.toolbar-left button,
.toolbar-right button {
    gap: 3px;
}

.toolbar-left .caret,
.toolbar-right .caret {
    margin-left: 4px;
}

.toolbar-left strong {
    margin-left: 6px;
    color: #fff;
}

.unity-logo {
    width: 26px;
    height: 30px;
}

.divider {
    width: 1px;
    height: 18px;
    margin: 0 15px 0 12px;
    background: #3a3a3a;
}

.store {
    margin-left: 22px;
}

.packages {
    margin-left: 28px;
}

.ai {
    margin-left: 25px;
}

.play-controls {
    display: flex;
    gap: 4px;
}

.play-controls button {
    width: 48px;
    height: 30px;
    justify-content: center;
    background: #505050;
    border-radius: 4px;
}

.play-controls button:disabled {
    background: #303030;
    color: #777;
}

.toolbar-right {
    display: flex;
    justify-content: flex-end;
    gap: 24px;
    padding-top: 2px;
}

.toolbar-right .cloud,
.toolbar-right .history {
    margin-right: 6px;
}

.toolbar-right .layout {
    margin-right: 3px;
}

.toolbar-right .help {
    margin-right: 9px;
}

/* Workspace */
.workspace {
    flex: 1;
    display: grid;
    grid-template-columns: 941fr 332fr 641fr;
    gap: 3px;
}

.panel {
    min-width: 0;
    display: flex;
    flex-direction: column;
    overflow: hidden;
}

.tabs {
    height: 36px;
    display: flex;
}

.tab {
    gap: 2px;
    padding: 2px 24px 0 12px;
    border-radius: 5px 5px 0 0;
}

.tab.active {
    background: #3c3c3c;
}

.tab.focused {
    padding-top: 0;
    border-top: 3px solid #2c5d87;
}

.tab-game {
    gap: 4px;
    padding-left: 10px;
    padding-right: 22px;
}

.tab-tools {
    margin-left: auto;
    display: flex;
    align-items: center;
    gap: 15px;
    padding-right: 17px;
}

/* Scene toolbar */
.scene-toolbar {
    height: 40px;
    display: flex;
    align-items: center;
    gap: 4px;
    padding-left: 9px;
    background: #3c3c3c;
}

.grip {
    flex: none;
    width: 6px;
    height: 24px;
    margin: 0 6px 0 8px;
    border: solid #555;
    border-width: 0 1px;
}

.grip:first-child {
    margin-left: 0;
    margin-right: 5px;
}

.group {
    display: flex;
    gap: 2px;
}

.tool {
    flex: none;
    width: 48px;
    height: 30px;
    justify-content: center;
    background: #585858;
    border-radius: 3px;
}

.tool.on {
    background: #46607c;
    color: #eee;
}

.tool.drop {
    width: auto;
    gap: 4px;
    padding: 0 8px 0 5px;
}

.tool.drop .caret {
    margin-left: 4px;
}

.tool.narrow {
    width: 33px;
}

.tool.arrow {
    width: 21px;
}

.tool.mode {
    font-size: 16px;
    font-weight: 600;
}

.snap-size {
    flex: none;
    width: 56px;
    height: 30px;
    padding: 0 8px;
}

/* Scene viewport */
.viewport {
    position: relative;
    flex: 1;
    overflow: hidden;
}

.scene {
    position: absolute;
    inset: 0;
    width: 100%;
    height: 100%;
}

.ground {
    fill: #464646;
}

.grid-lines {
    stroke: #b0b0b0;
    stroke-opacity: 0.4;
}

.collider {
    stroke: #a9cfa2;
    fill: none;
}

.outline {
    fill: none;
    stroke: #ff6a0a;
    stroke-width: 3;
}

.rect-handle {
    fill: none;
    stroke: #98a5bd;
    stroke-width: 2;
}

.rect-shadow {
    fill: none;
    stroke: #566d92;
    stroke-width: 3;
}

.knobs {
    fill: url(#handle);
    stroke: #14233a;
    stroke-width: 2;
}

.pivot-ring {
    fill: none;
    stroke: #4470a8;
    stroke-width: 3;
}

.palette {
    position: absolute;
    top: 3px;
    left: 9px;
    width: 66px;
    padding: 9px 5px 3px;
    display: flex;
    flex-direction: column;
    background: #0e0e0e;
    border-radius: 5px;
}

.palette-grip {
    align-self: center;
    width: 24px;
    height: 7px;
    margin-bottom: 19px;
    border: solid #585858;
    border-width: 1px 0;
}

.palette-mode {
    gap: 5px;
    padding-left: 4px;
    margin-bottom: 13px;
}

.palette-tools {
    display: flex;
    flex-direction: column;
    gap: 2px;
    margin-bottom: 6px;
    border-radius: 5px;
    overflow: hidden;
}

.palette-tools .tool,
.palette-component .tool {
    width: 100%;
    border-radius: 0;
}

.palette-component {
    border: 2px solid #585858;
    border-radius: 5px;
}

.component-pick {
    width: 100%;
    height: 38px;
    justify-content: space-between;
    padding: 0 4px 0 6px;
}

.overlay-bar {
    position: absolute;
    left: 9px;
    bottom: 3px;
    height: 40px;
    display: flex;
    align-items: center;
    gap: 2px;
    padding: 0 4px 0 8px;
    background: #0e0e0e;
    border-radius: 5px;
}

.overlay-bar .grip {
    margin-right: 8px;
}

.overlay-bar .tool {
    border-radius: 2px;
    color: #c4c4c4;
}

/* Hierarchy */
.tab-project {
    padding: 2px 10px 0 12px;
}

.hierarchy-toolbar {
    height: 31px;
    display: flex;
    align-items: center;
    padding: 0 6px 0 7px;
    background: #3c3c3c;
    border-bottom: 1px solid #232323;
}

.create {
    gap: 4px;
    margin-right: 18px;
}

.search-field {
    flex: 1;
    min-width: 0;
    height: 25px;
    display: flex;
    align-items: center;
    gap: 6px;
    padding-left: 6px;
    background: #2a2a2a;
    border: 1px solid #212121;
    border-top-color: #0d0d0d;
    border-radius: 5px 0 0 5px;
}

.search-field input {
    flex: 1;
    min-width: 0;
    padding: 0;
    border: none;
    background: none;
    font-size: 17px;
}

.search-field input::placeholder {
    color: #6e6e6e;
}

.search-icon {
    width: 16px;
    height: 16px;
}

.popout {
    width: 27px;
    height: 25px;
    justify-content: center;
    border: 1px solid #242424;
    border-radius: 0 5px 5px 0;
}

.hierarchy {
    flex: 1;
    display: flex;
    flex-direction: column;
    background: #383838;
}

.scene-row {
    height: 25px;
    display: flex;
    align-items: center;
    gap: 7px;
    padding: 0 15px 0 51px;
    background: #292929;
    border-bottom: 1px solid #3c3c3c;
    color: #dadada;
}

.scene-row button {
    margin-left: auto;
}

.scene-icon {
    width: 20px;
    height: 20px;
    color: #eee;
}

.objects {
    flex: 1;
    margin: 0;
    padding: 0;
    list-style: none;
    background: linear-gradient(90deg, #313131 48px, transparent 48px);
}

.objects li {
    height: 24px;
    display: flex;
    align-items: center;
    gap: 4px;
    padding-left: 89px;
}

.objects li.selected {
    background: linear-gradient(90deg, #36527a 48px, #2c5d87 48px);
    color: #fff;
}

.objects li .icon {
    color: #c4c4c4;
}

/* Inspector */
.inspector {
    flex: 1;
    background: #383838;
    border-top: 1px solid #232323;
}

.object-header {
    display: flex;
    padding: 13px 7px 13px 8px;
    background: #3c3c3c;
}

.object-icon {
    width: 44px;
    align-items: flex-end;
    align-self: flex-start;
}

.object-icon svg {
    width: 36px;
    height: 36px;
}

.object-icon .caret {
    margin-left: -4px;
}

.object-fields {
    flex: 1;
    min-width: 0;
}

.object-name,
.object-tags {
    display: flex;
    align-items: center;
}

.object-name {
    gap: 6px;
    padding: 0 3px 0 15px;
    margin-bottom: 10px;
}

.object-name .field {
    flex: 1;
    margin-left: 3px;
    font-weight: 500;
}

.object-name label,
.object-tags label {
    color: #b0b0b0;
}

.object-name button {
    margin-left: 13px;
}

.object-tags label:first-child {
    margin-left: 8px;
}

.object-tags .select {
    margin-left: 7px;
    flex: 238;
}

.object-tags .select:last-child {
    flex: 223;
}

.object-tags label:nth-of-type(2) {
    margin-left: 20px;
}

.component {
    border-top: 2px solid #1a1a1a;
}

.component header {
    height: 32px;
    display: flex;
    align-items: center;
    padding: 0 17px 0 10px;
    background: #3e3e3e;
    border-bottom: 1px solid #303030;
}

.component.folded header {
    border-bottom: none;
}

.component header .icon:nth-child(2) {
    margin: 0 6px 0 8px;
}

.component h2 {
    flex: 1;
    margin: 0 0 0 9px;
    font-size: 18px;
    font-weight: 600;
    color: #d2d2d2;
}

.component header button {
    margin-left: 6px;
}

.component header button:last-child {
    margin-left: 15px;
}

.no-check {
    width: 21px;
}

.component-body {
    padding: 4px 7px 11px 28px;
}

.row {
    height: 30px;
    display: flex;
    align-items: center;
}

.row .field {
    flex: 1;
}

.row-label,
.vector label,
.element-name {
    color: #b4b4b4;
}

.row-label {
    width: 232px;
    display: flex;
    align-items: center;
    justify-content: space-between;
    flex: none;
}

.row-label button {
    margin-right: 11px;
}

.row.nested {
    height: 32px;
    padding-left: 23px;
}

.row.nested .row-label {
    width: 209px;
}

.vector {
    gap: 7px;
}

.vector .row-label {
    margin-right: -7px;
}

.vector label {
    flex: 1;
    min-width: 0;
    display: grid;
    grid-template-columns: 23px 1fr;
    align-items: center;
}

.foldout {
    height: 28px;
    display: flex;
    align-items: center;
    gap: 8px;
    margin-left: -18px;
}

.foldout strong,
.scene-row strong {
    font-weight: 600;
}

.materials {
    margin-top: 2px;
}

.count {
    width: 72px;
    margin-left: auto;
}

.material-list {
    display: flex;
    flex-direction: column;
    margin: 3px 0 6px -1px;
}

.material-item {
    height: 41px;
    display: flex;
    align-items: center;
    padding: 0 8px;
    background: #414141;
    border: 2px solid #242424;
    border-radius: 4px;
}

.drag {
    width: 15px;
    height: 7px;
    border: solid #666;
    border-width: 1px 0;
}

.element-name {
    width: 198px;
    margin-left: 20px;
}

.object-field {
    flex: 1;
    height: 27px;
    display: flex;
    align-items: center;
    gap: 2px;
    padding-left: 3px;
    background: #282828;
    border: 2px solid #1f1f1f;
    border-radius: 4px;
    overflow: hidden;
    color: #d2d2d2;
}

.object-field button {
    width: 28px;
    height: 23px;
    justify-content: center;
    margin-left: auto;
    background: #373737;
}

.material-icon {
    width: 16px;
    height: 16px;
}

.list-footer {
    align-self: flex-end;
    height: 29px;
    display: flex;
    gap: 13px;
    margin: -2px 14px 0 0;
    padding: 0 12px 0 10px;
    background: #414141;
    border: 2px solid #242424;
    border-top: none;
    border-radius: 0 0 4px 4px;
}

.add-component {
    display: flex;
    justify-content: center;
    padding-top: 12px;
    border-top: 2px solid #1a1a1a;
}

.add-component button {
    width: 344px;
    height: 36px;
    justify-content: center;
    background: #585858;
    border: 1px solid #303030;
    border-bottom: 2px solid #242424;
    border-radius: 4px;
    color: #eee;
}

/* Status bar */
.statusbar {
    height: 33px;
    display: flex;
    justify-content: flex-end;
    align-items: flex-end;
    padding-right: 2px;
    background: #141414;
}

.statusbar button {
    width: 39px;
    height: 30px;
    justify-content: center;
    border-left: 2px solid #222;
}

.statusbar .icon {
    width: 21px;
    height: 21px;
}
```
